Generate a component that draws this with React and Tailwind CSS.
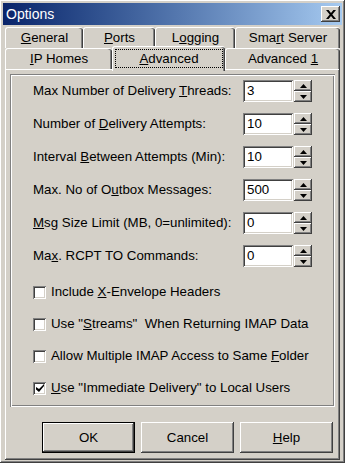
import React from 'react';

const raised = 'shadow-[inset_-1px_-1px_#404040,inset_1px_1px_#ffffff,inset_-2px_-2px_#808080,inset_2px_2px_#d4d0c8]';
const sunken = 'shadow-[inset_1px_1px_#808080,inset_-1px_-1px_#ffffff,inset_2px_2px_#404040,inset_-2px_-2px_#d4d0c8]';

function Tab({ children, w, selected }) {
  if (selected) {
    return (
      <div className={`${w} relative z-10 h-[25px] -mb-[2px] flex items-start pt-[2px] px-[2px] bg-[#d4d0c8] border-t border-l border-white rounded-t-[3px] shadow-[inset_-1px_0_#404040,inset_-2px_0_#808080]`}>
        <div className="w-full h-[19px] flex items-center justify-center border border-dotted border-black">
          {children}
        </div>
      </div>
    );
  }
  return (
    <div className={`${w} h-[21px] flex items-center justify-center bg-[#d4d0c8] border-t border-l border-white rounded-t-[3px] shadow-[inset_-1px_0_#404040,inset_-2px_0_#808080]`}>
      {children}
    </div>
  );
}

function Arrow({ up }) {
  return (
    <svg width="7" height="4" viewBox="0 0 7 4">
      {up ? <path d="M3.5 0 L7 4 L0 4 Z" fill="#000" /> : <path d="M0 0 L7 0 L3.5 4 Z" fill="#000" />}
    </svg>
  );
}

function Spinner({ label, value }) {
  return (
    <div className="flex items-center h-[22px]">
      <div className="flex-1">{label}</div>
      <div className={`w-[50px] h-[22px] bg-white ${sunken} flex items-center pl-[4px]`}>{value}</div>
      <div className="w-[18px] h-[22px] flex flex-col ml-[1px]">
        <div className={`h-[11px] flex items-center justify-center ${raised}`}><Arrow up /></div>
        <div className={`h-[11px] flex items-center justify-center ${raised}`}><Arrow /></div>
      </div>
    </div>
  );
}

function Check({ label, checked }) {
  return (
    <div className="flex items-center h-[20px]">
      <div className={`w-[13px] h-[13px] bg-white ${sunken} flex items-center justify-center`}>
        {checked && (
          <svg width="8" height="8" viewBox="0 0 8 8">
            <path d="M0 3 L0 5.5 L3 8 L8 2 L8 0 L3 5 Z" fill="#000" />
          </svg>
        )}
      </div>
      <div className="ml-[5px]">{label}</div>
    </div>
  );
}

function Button({ children, def }) {
  if (def) {
    return (
      <div className="w-[93px] h-[31px] border border-black">
        <div className={`w-full h-full flex items-center justify-center ${raised}`}>{children}</div>
      </div>
    );
  }
  return <div className={`w-[93px] h-[31px] flex items-center justify-center ${raised}`}>{children}</div>;
}

export default function App() {
  const spinners = [
    { label: <>Max Number of Delivery <u>T</u>hreads:</>, value: '3' },
    { label: <>Number of <u>D</u>elivery Attempts:</>, value: '10' },
    { label: <>Interval <u>B</u>etween Attempts (Min):</>, value: '10' },
    { label: <>Max. No of O<u>u</u>tbox Messages:</>, value: '500' },
    { label: <><u>M</u>sg Size Limit (MB, 0=unlimited):</>, value: '0' },
    { label: <>Ma<u>x</u>. RCPT TO Commands:</>, value: '0' },
  ];

  const checks = [
    { label: <>Include <u>X</u>-Envelope Headers</>, checked: false },
    { label: <>Use "<u>S</u>treams"&nbsp; When Returning IMAP Data</>, checked: false },
    { label: <>Allow Multiple IMAP Access to Same <u>F</u>older</>, checked: false },
    { label: <><u>U</u>se "Immediate Delivery" to Local Users</>, checked: true },
  ];

  return (
    <div className={`w-[345px] h-[463px] bg-[#d4d0c8] p-[3px] flex flex-col text-black text-[13.3px] leading-none font-['Liberation_Sans','Arial',sans-serif] ${raised}`}>
      {/* Title bar */}
      <div className="h-[22px] flex items-center bg-gradient-to-r from-[#0a246a] to-[#a6caf0]">
        <div className="flex-1 pl-[3px] text-white text-[14px]">Options</div>
        <div className={`w-[19px] h-[16px] mr-[2px] bg-[#d4d0c8] flex items-center justify-center ${raised}`}>
          <svg width="10" height="9" viewBox="0 0 10 9">
            <path d="M0 0 L2.6 0 L5 2.9 L7.4 0 L10 0 L6.3 4.5 L10 9 L7.4 9 L5 6.1 L2.6 9 L0 9 L3.7 4.5 Z" fill="#000" />
          </svg>
        </div>
      </div>

      <div className="flex-1 flex flex-col px-[2px] pt-[2px]">
        {/* Tabs */}
        <div className="flex">
          <Tab w="w-[78px]"><span><u>G</u>eneral</span></Tab>
          <Tab w="w-[72px]"><span><u>P</u>orts</span></Tab>
          <Tab w="w-[80px]"><span>L<u>o</u>gging</span></Tab>
          <Tab w="w-[105px]"><span>Sma<u>r</u>t Server</span></Tab>
        </div>
        <div className="flex items-end h-[21px]">
          <Tab w="w-[107px]"><span><u>I</u>P Homes</span></Tab>
          <Tab w="w-[113px]" selected><span><u>A</u>dvanced</span></Tab>
          <Tab w="w-[115px]"><span>Advanced <u>1</u></span></Tab>
        </div>

        {/* Panel */}
        <div className={`flex-1 flex flex-col p-[5px] pb-[7px] ${raised}`}>
          <div className="flex-1 flex flex-col px-[23px] pt-[6px] shadow-[inset_1px_1px_#808080,inset_-1px_-1px_#ffffff,inset_2px_2px_#ffffff,inset_-2px_-2px_#808080]">
            <div className="flex flex-col gap-[11px]">
              {spinners.map((s, i) => (
                <Spinner key={i} label={s.label} value={s.value} />
              ))}
            </div>
            <div className="flex flex-col gap-[12px] mt-[15px]">
              {checks.map((c, i) => (
                <Check key={i} label={c.label} checked={c.checked} />
              ))}
            </div>
          </div>
          <div className="flex justify-end gap-[6px] mt-[15px] pr-[2px]">
            <Button def>OK</Button>
            <Button>Cancel</Button>
            <Button><span><u>H</u>elp</span></Button>
          </div>
        </div>
      </div>
    </div>
  );
}
